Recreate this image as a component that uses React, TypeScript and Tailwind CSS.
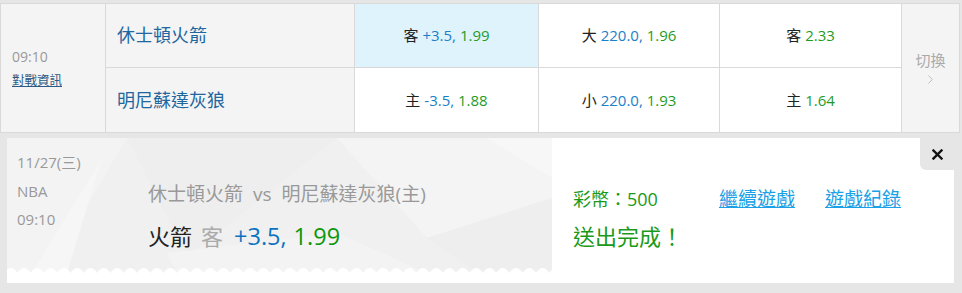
import { ChevronRight } from "lucide-react";

const font = { fontFamily: '"Open Sans", "Noto Sans CJK TC", sans-serif' };

const odds = [
  [
    { tag: "客", line: "+3.5", price: "1.99", active: true },
    { tag: "主", line: "-3.5", price: "1.88" },
  ],
  [
    { tag: "大", line: "220.0", price: "1.96" },
    { tag: "小", line: "220.0", price: "1.93" },
  ],
  [
    { tag: "客", price: "2.33" },
    { tag: "主", price: "1.64" },
  ],
];

const widths = ["w-[184px]", "w-[181px]", "w-[182px]"];

function OddsCell({ tag, line, price, active, top }: { tag: string; line?: string; price: string; active?: boolean; top?: boolean }) {
  return (
    <div
      className={`h-[64px] flex items-center justify-center text-[15px] ${active ? "bg-[#dff3fc]" : "bg-white"} ${top ? "border-b border-[#d9d9d9]" : ""}`}
    >
      <span className="text-[#222] mr-[4px]">{tag}</span>
      {line && <span className="text-[#1a80c8]">{line},&nbsp;</span>}
      <span className="text-[#1f9c1f]">{price}</span>
    </div>
  );
}

// ticket background: soft polygons plus a scalloped bottom edge
function TicketBg() {
  return (
    <svg className="absolute inset-0" width="545" height="135" viewBox="0 0 545 135">
      <defs>
        <pattern id="scallop" width="13.3" height="8" patternUnits="userSpaceOnUse" x="-3" y="127">
          <path d="M0 8 Q6.65 -2 13.3 8 Z" fill="#ffffff" />
        </pattern>
      </defs>
      <rect width="545" height="135" fill="#f0f0f0" />
      <polygon points="0,0 120,0 40,135 0,135" fill="#f3f3f3" />
      <polygon points="25,135 95,20 60,135" fill="#f6f6f6" />
      <polygon points="120,0 330,0 180,120" fill="#eeeeee" />
      <polygon points="160,115 330,95 420,135 170,135" fill="#f3f3f3" />
      <polygon points="330,0 545,0 545,60 420,100" fill="#f4f4f4" />
      <polygon points="420,100 545,60 545,135 470,135" fill="#eeeeee" />
      <polygon points="480,0 545,0 545,40" fill="#f7f7f7" />
      <rect y="127" width="545" height="8" fill="url(#scallop)" />
    </svg>
  );
}

export default function App() {
  return (
    <div className="w-[962px] h-[293px] bg-[#e6e6e6] overflow-hidden" style={font}>
      {/* match row */}
      <div className="mt-[3px] flex w-[960px] border border-[#d9d9d9] bg-[#f4f4f4]">
        <div className="w-[105px] border-r border-[#d9d9d9] flex flex-col justify-center pl-[11px]">
          <span className="text-[14px] text-[#999] leading-[20px]">09:10</span>
          <a href="#" className="mt-[5px] text-[12.5px] leading-[18px] text-[#2a5a85] underline">
            對戰資訊
          </a>
        </div>
        <div className="w-[249px] border-r border-[#d9d9d9] flex flex-col">
          <div className="h-[64px] border-b border-[#d9d9d9] flex items-center pl-[11px] text-[18px] text-[#21679f]">
            休士頓火箭
          </div>
          <div className="h-[64px] flex items-center pl-[11px] text-[18px] text-[#21679f]">明尼蘇達灰狼</div>
        </div>
        {odds.map((col, i) => (
          <div key={i} className={`${widths[i]} border-r border-[#d9d9d9] flex flex-col`}>
            <OddsCell {...col[0]} top />
            <OddsCell {...col[1]} />
          </div>
        ))}
        <div className="flex-1 flex flex-col items-center justify-center text-[#aaa]">
          <span className="text-[15px] leading-[20px]">切換</span>
          <ChevronRight size={15} strokeWidth={1.5} className="mt-[2px] text-[#bbb]" />
        </div>
      </div>

      {/* bet confirmation */}
      <div className="relative mt-[5px] ml-[7px] w-[947px] h-[145px] bg-white flex">
        <div className="relative w-[545px] h-[135px] flex">
          <TicketBg />
          <div className="relative w-[141px] pl-[10px] pt-[10px] text-[15px] leading-[28.5px] text-[#999]">
            <div>11/27(三)</div>
            <div>NBA</div>
            <div>09:10</div>
          </div>
          <div className="relative pt-[42px]">
            <div className="text-[19px] leading-[28px] text-[#999]">
              休士頓火箭<span className="mx-[10px]">vs</span>明尼蘇達灰狼(主)
            </div>
            <div className="mt-[12px] flex items-baseline text-[22px] leading-[32px]">
              <span className="text-[#222]">火箭</span>
              <span className="ml-[9px] text-[#aaa]">客</span>
              <span className="ml-[11px] text-[23.5px] text-[#0c73c2]">+3.5,</span>
              <span className="ml-[7px] text-[23.5px] text-[#0c960c]">1.99</span>
            </div>
          </div>
        </div>
        <div className="pl-[21px] pt-[48px]">
          <div className="flex items-center h-[26px]">
            <span className="w-[146px] text-[18px] text-[#1a9a1a]">彩幣：500</span>
            <a href="#" className="text-[19px] text-[#1aa0e6] underline">繼續遊戲</a>
            <a href="#" className="ml-[30px] text-[19px] text-[#1aa0e6] underline">遊戲紀錄</a>
          </div>
          <div className="mt-[8px] text-[22px] leading-[32px] text-[#1a9a1a]">送出完成！</div>
        </div>
        <button className="absolute top-0 right-0 w-[34px] h-[32px] bg-[#e6e6e6] rounded-bl-[6px] flex items-center justify-center">
          <svg width="11" height="11" viewBox="0 0 11 11">
            <path d="M1.5 1.5 L9.5 9.5 M9.5 1.5 L1.5 9.5" stroke="#111" strokeWidth="2.4" strokeLinecap="square" />
          </svg>
        </button>
      </div>
    </div>
  );
}
